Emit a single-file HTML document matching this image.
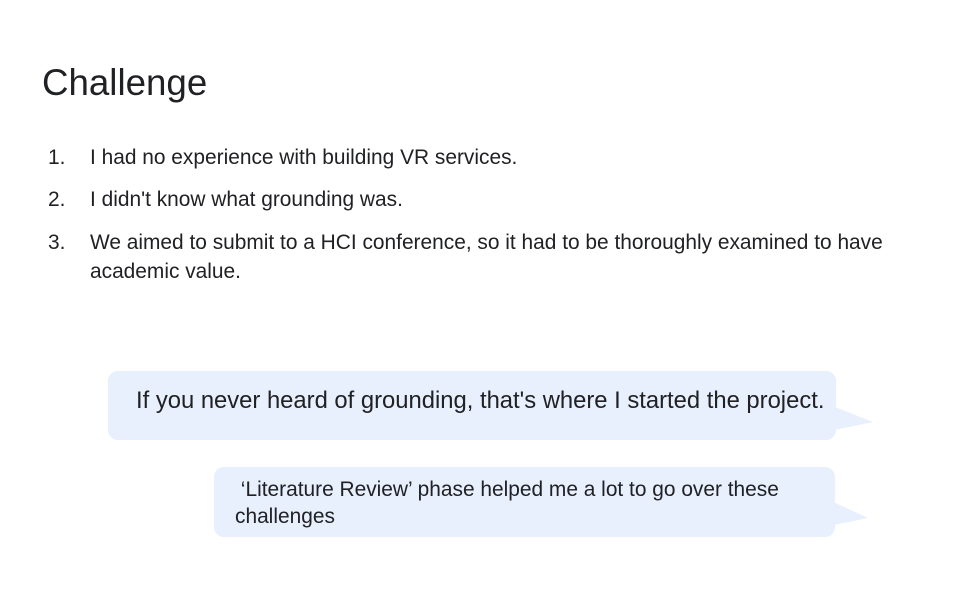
<!DOCTYPE html>
<html><head><style>
body{margin:0;width:960px;height:600px;background:#fff;font-family:"Liberation Sans",sans-serif;color:#202124;position:relative;overflow:hidden}
h1{position:absolute;left:42px;top:62px;margin:0;font-weight:normal;font-size:36.7px;line-height:42px}
.li{position:absolute;font-size:20.9px;line-height:29px}
.n{position:absolute;left:48px}
.t{position:absolute;left:90px;width:815px}
.b{position:absolute;background:#e8effd;border-radius:10px}
</style></head><body>
<h1>Challenge</h1>
<div class="li" style="top:143px"><span class="n">1.</span><span class="t" style="white-space:nowrap">I had no experience with building VR services.</span></div>
<div class="li" style="top:185px"><span class="n">2.</span><span class="t" style="white-space:nowrap">I didn't know what grounding was.</span></div>
<div class="li" style="top:228px"><span class="n">3.</span><span class="t">We aimed to submit to a HCI conference, so it had to be thoroughly examined to have academic value.</span></div>
<div class="b" style="left:108px;top:371px;width:728px;height:69px"></div>
<svg style="position:absolute;left:830px;top:405px" width="50" height="30"><polygon points="0,0 43,17 0,26" fill="#e8effd"/></svg>
<div style="position:absolute;left:136px;top:385px;font-size:23.8px;line-height:32px;white-space:nowrap">If you never heard of grounding, that's where I started the project.</div>
<div class="b" style="left:214px;top:467px;width:621px;height:70px"></div>
<svg style="position:absolute;left:829px;top:500px" width="50" height="30"><polygon points="0,0 39,18 0,26" fill="#e8effd"/></svg>
<div style="position:absolute;left:235px;top:476px;font-size:20.9px;line-height:27px;width:590px">&nbsp;‘Literature Review’ phase helped me a lot to go over these challenges</div>
</body></html>
